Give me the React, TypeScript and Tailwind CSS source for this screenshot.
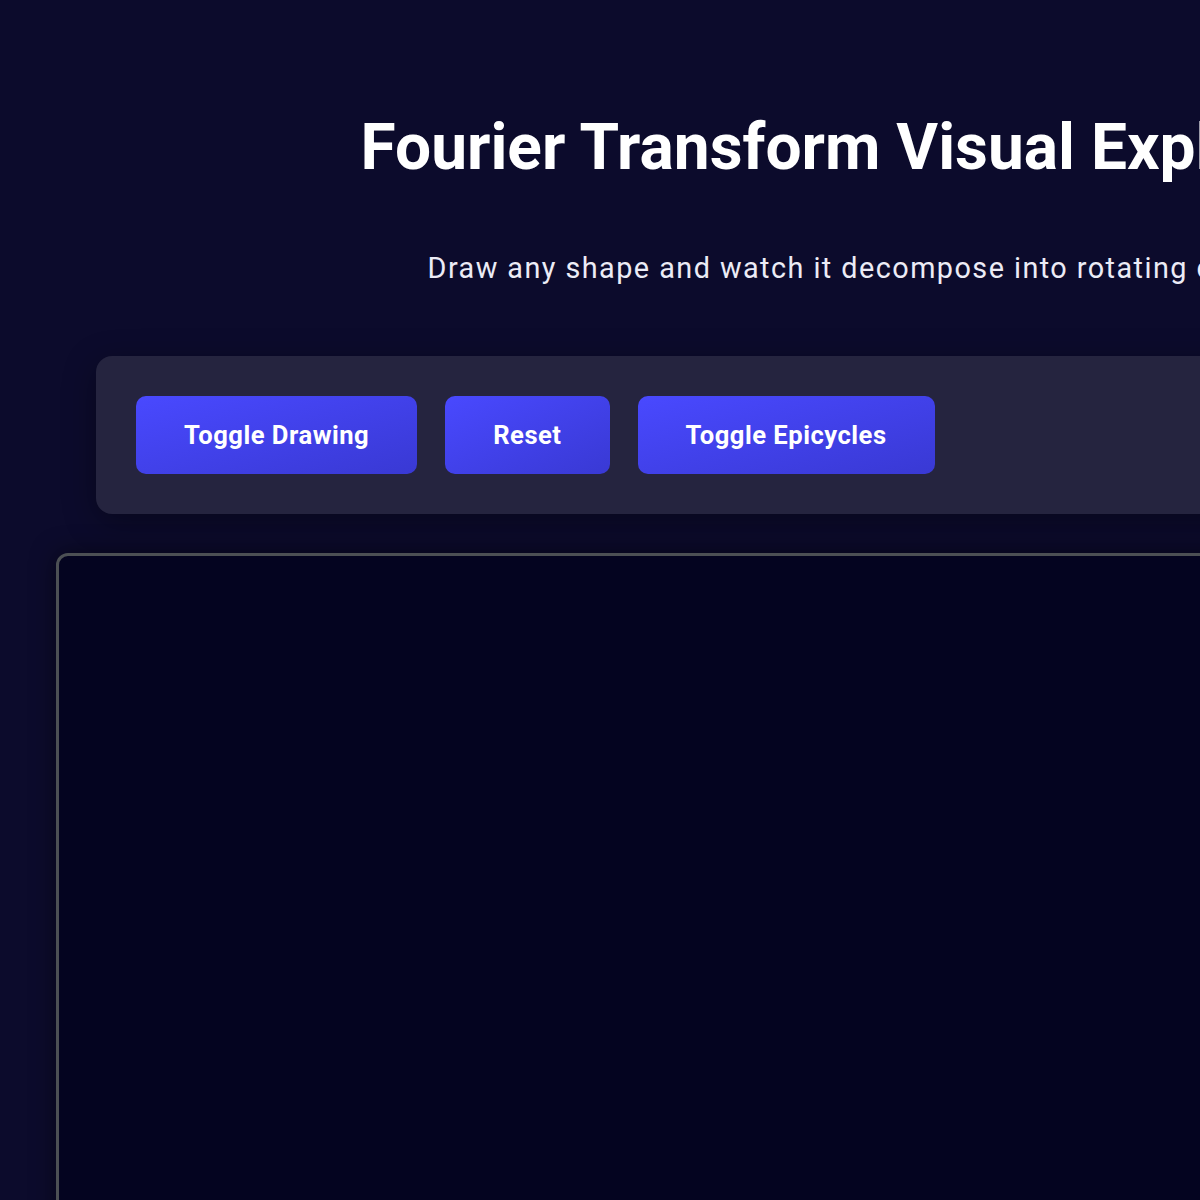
const buttons = ["Toggle Drawing", "Reset", "Toggle Epicycles"];

export default function App() {
  return (
    <div
      className="w-[1718px] min-h-screen bg-[#0c0b2c] px-14 pt-[110px] pb-14 text-white"
      style={{ fontFamily: "Roboto, 'Noto Sans', sans-serif" }}
    >
      <h1 className="text-center text-[64px] font-bold leading-[75px]">
        Fourier Transform Visual Explainer
      </h1>
      <p className="mt-[66px] text-center text-[28.8px] leading-[34px] tracking-[1.45px] text-[#ececf6]">
        Draw any shape and watch it decompose into rotating circles
      </p>

      <div className="mx-10 mt-[71px] flex gap-7 rounded-2xl bg-[#25243f] p-10 shadow-[0_8px_32px_rgba(0,0,0,0.35)]">
        {buttons.map((label) => (
          <button
            key={label}
            className="rounded-[10px] bg-gradient-to-br from-[#4949ff] to-[#3939d4] px-12 py-6 text-[25.6px] font-bold leading-[30px] tracking-[0.5px] text-white"
          >
            {label}
          </button>
        ))}
      </div>

      <div className="mt-[39px] h-[906px] w-[1606px] rounded-xl border-[3px] border-[#4c5054] bg-[#040420] shadow-[0_0_24px_rgba(0,0,0,0.5)]" />
    </div>
  );
}
